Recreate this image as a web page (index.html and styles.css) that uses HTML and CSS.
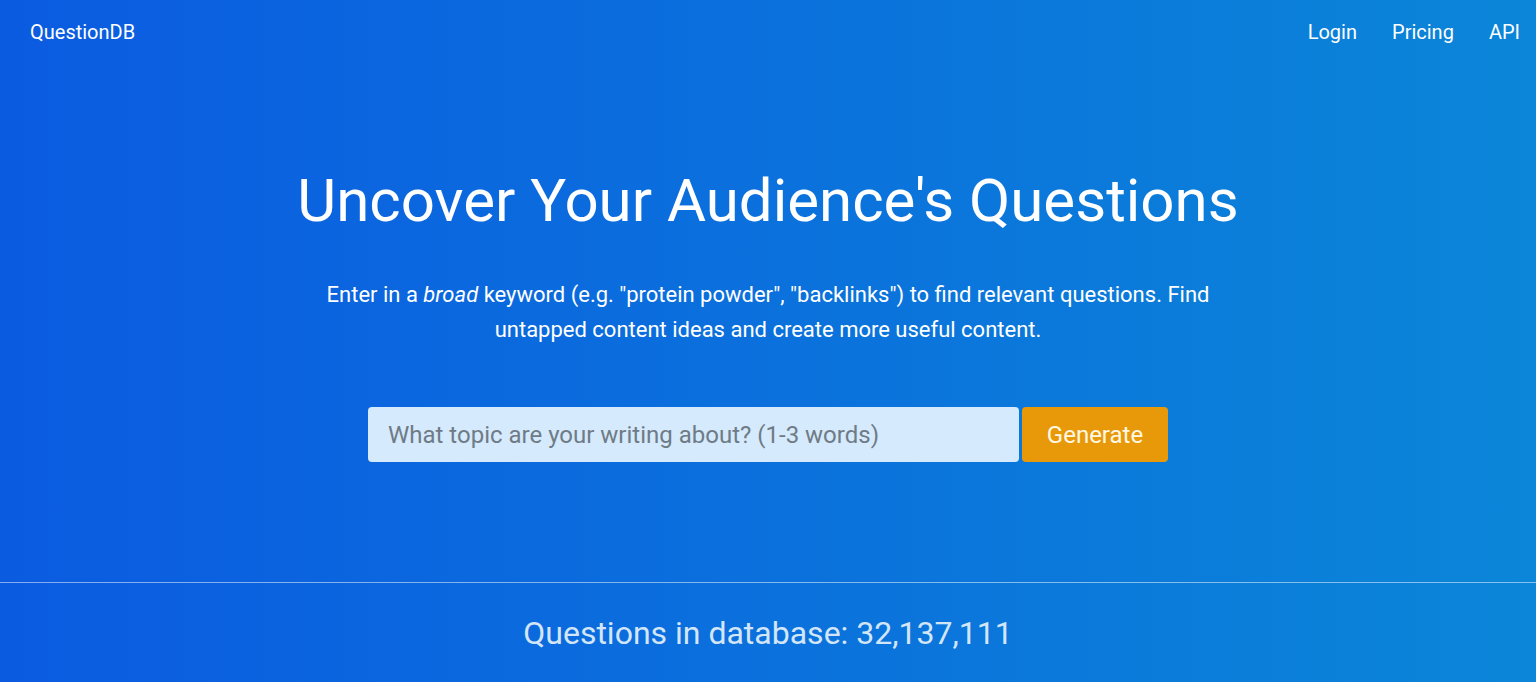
FILE: index.html
```html
<!DOCTYPE html>
<html lang="en">
<head>
<meta charset="utf-8">
<title>QuestionDB</title>
<link rel="stylesheet" href="styles.css">
</head>
<body>
<div class="page">
  <header class="nav">
    <a class="brand" href="#">QuestionDB</a>
    <nav class="links">
      <a href="#">Login</a>
      <a href="#">Pricing</a>
      <a href="#">API</a>
    </nav>
  </header>
  <section class="hero">
    <h1 class="title">Uncover Your Audience's Questions</h1>
    <p class="lead">Enter in a <em>broad</em> keyword (e.g. "protein powder", "backlinks") to find relevant questions. Find untapped content ideas and create more useful content.</p>
    <form class="search">
      <input class="search-input" type="text" placeholder="What topic are your writing about? (1-3 words)">
      <button class="search-btn" type="button">Generate</button>
    </form>
  </section>
  <section class="stats">
    <h2 class="count">Questions in database: 32,137,111</h2>
  </section>
</div>
</body>
</html>
```
FILE: styles.css
```css
* { box-sizing: border-box; }
html, body { margin: 0; padding: 0; }
body {
  font-family: Roboto, "Noto Sans", Arial, sans-serif;
  color: #fff;
  background: linear-gradient(90deg, #0b5be1 0%, #0b86d8 100%);
  min-height: 682px;
}
.page { min-height: 682px; }
.nav {
  display: flex;
  justify-content: space-between;
  align-items: center;
  height: 64px;
  padding: 0 16px 0 30px;
}
.brand {
  color: #fff;
  text-decoration: none;
  font-size: 20px;
}
.links { display: flex; gap: 35px; }
.links a {
  color: #fff;
  text-decoration: none;
  font-size: 20px;
}
.hero {
  display: flex;
  flex-direction: column;
  align-items: center;
  padding: 100px 0 120px;
  border-bottom: 1px solid rgba(255,255,255,0.5);
}
.title {
  margin: 0;
  font-weight: 400;
  font-size: 60px;
  line-height: 74px;
}
.lead {
  margin: 39px 0 0;
  max-width: 910px;
  text-align: center;
  font-size: 22px;
  line-height: 35px;
}
.search {
  display: flex;
  gap: 3px;
  margin-top: 60px;
  width: 800px;
}
.search-input {
  flex: 1;
  height: 55px;
  border: 0;
  border-radius: 4px;
  background: #d5eafc;
  padding: 0 20px;
  font-family: inherit;
  font-size: 24px;
  color: #333;
}
.search-input::placeholder { color: #6f7b86; }
.search-btn {
  width: 146px;
  height: 55px;
  border: 0;
  border-radius: 4px;
  background: #e8990a;
  color: #fff8e6;
  font-family: inherit;
  font-size: 24px;
}
.stats {
  display: flex;
  justify-content: center;
  padding-top: 31px;
}
.count {
  margin: 0;
  font-weight: 400;
  font-size: 32px;
  color: #d3e6f8;
}
```
